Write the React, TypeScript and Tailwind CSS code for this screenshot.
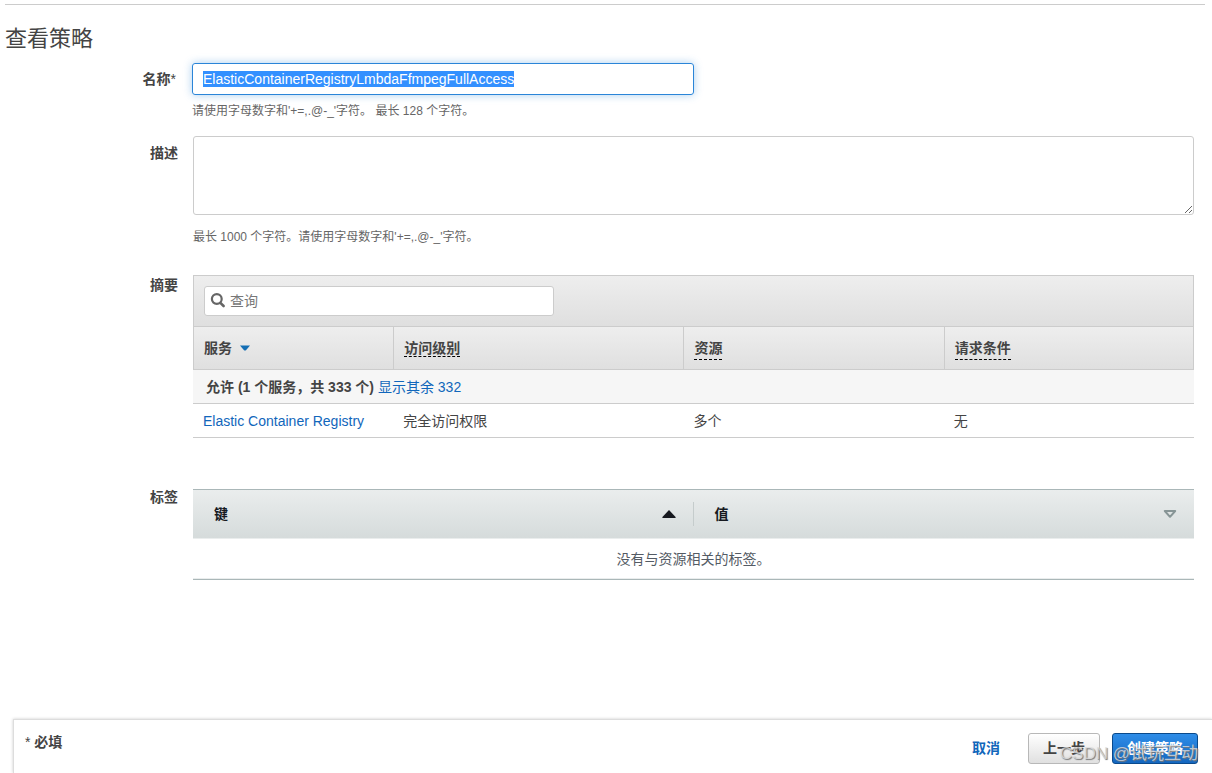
import React, { ReactNode, useEffect, useRef } from 'react';

const SearchIcon = ({ className }: { className?: string }) => (
    <svg xmlns="http://www.w3.org/2000/svg" className={className} viewBox="0 0 16 16" fill="none" stroke="currentColor">
        <circle cx="6.8" cy="6" r="4.9" strokeWidth={2.2} />
        <path d="M10.4 9.8l3.2 3.2" strokeWidth={2.6} strokeLinecap="round" />
    </svg>
);

const CaretDownIcon = ({ className }: { className?: string }) => (
    <svg xmlns="http://www.w3.org/2000/svg" className={className} viewBox="0 0 10 6" fill="currentColor">
        <path d="M0 .5h10L6 5.2Q5 6 4 5.2z" />
    </svg>
);

const SortAscIcon = ({ className }: { className?: string }) => (
    <svg xmlns="http://www.w3.org/2000/svg" className={className} viewBox="0 0 14 8" fill="currentColor">
        <path d="M7 0l6.8 7.2-.5.8H.7l-.5-.8z" />
    </svg>
);

const SortNoneIcon = ({ className }: { className?: string }) => (
    <svg xmlns="http://www.w3.org/2000/svg" className={className} viewBox="0 0 14 8" fill="none" stroke="currentColor">
        <path d="M1.8 1h10.4L7 6.8z" strokeWidth={2} strokeLinejoin="round" />
    </svg>
);

type FormRowProps = {
    label: string;
    required?: boolean;
    htmlFor?: string;
    className?: string;
    children: ReactNode;
};

const FormRow = ({ label, required, htmlFor, className, children }: FormRowProps) => (
    <div className={`flex pr-[18px] ${className ?? ''}`}>
        <div className={`shrink-0 text-right font-bold leading-5 ${required ? 'mr-4 w-[176px]' : 'mr-[15px] w-[178px]'}`}>
            {htmlFor ? (
                <label htmlFor={htmlFor}>
                    {label}
                    {required && <span className="font-normal">*</span>}
                </label>
            ) : (
                <span>{label}</span>
            )}
        </div>
        <div className="min-w-0 flex-1">{children}</div>
    </div>
);

const columns = [
    { title: '访问级别', underline: 'border-b border-dashed border-black' },
    { title: '资源', underline: 'border-b border-dashed border-black pb-[3px]' },
    { title: '请求条件', underline: 'border-b border-dashed border-black pb-[3px]' },
];

const SummaryTable = () => (
    <div>
        <div className="border border-[#ccc] bg-linear-to-b from-[#eee] to-[#dfdfdf] p-[10px]">
            <div className="flex h-[30px] w-[350px] items-center gap-1 rounded-[3px] border border-[#ccc] bg-white px-[5px]">
                <SearchIcon className="h-4 w-4 shrink-0 text-[#666]" />
                <input type="search" aria-label="查询" placeholder="查询" className="min-w-0 flex-1 text-sm outline-none placeholder:text-[#777]" />
            </div>
        </div>
        <table className="w-full table-fixed border-separate border-spacing-0 text-left">
            <colgroup>
                <col className="w-[20%]" />
                <col className="w-[29%]" />
                <col className="w-[26%]" />
                <col className="w-[25%]" />
            </colgroup>
            <thead>
                <tr className="h-[43px] bg-linear-to-b from-[#eee] to-[#dfdfdf]">
                    <th className="border-b border-l border-[#ccc] px-[10px] py-0">
                        <button type="button" className="flex items-center gap-2 font-bold">
                            服务
                            <CaretDownIcon className="h-[6px] w-[10px] text-[#146eb4]" />
                        </button>
                    </th>
                    {columns.map((column) => (
                        <th key={column.title} className="border-b border-l border-[#ccc] px-[10px] py-0 last:border-r">
                            <span className={column.underline}>{column.title}</span>
                        </th>
                    ))}
                </tr>
            </thead>
            <tbody>
                <tr className="h-[34px] bg-[#f6f6f6]">
                    <td colSpan={4} className="border-b border-[#ccc] px-[13px] py-0">
                        <strong>允许 (1 个服务，共 333 个)</strong>{' '}
                        <a href="#all" className="text-[#1166bb]">显示其余 332</a>
                    </td>
                </tr>
                <tr className="h-[34px]">
                    <td className="border-b border-[#ccc] px-[10px] py-0">
                        <a href="#ecr" className="text-[#1166bb]">Elastic Container Registry</a>
                    </td>
                    <td className="border-b border-[#ccc] px-[10px] py-0">完全访问权限</td>
                    <td className="border-b border-[#ccc] px-[10px] py-0">多个</td>
                    <td className="border-b border-[#ccc] px-[10px] py-0">无</td>
                </tr>
            </tbody>
        </table>
    </div>
);

const TagsTable = () => (
    <table className="w-full table-fixed border-separate border-spacing-0 border-y border-[#aab7b8] text-left">
        <thead>
            <tr className="h-[49px] bg-linear-to-b from-[#eaeded] to-[#d5dbdb] text-[#16191f]">
                <th className="border-b border-[#eaeded] p-0">
                    <div className="flex h-6 items-center justify-between border-r border-[#c5cccc] pr-[17px] pl-[21px]">
                        键
                        <button type="button" aria-label="按键排序"><SortAscIcon className="h-2 w-[14px]" /></button>
                    </div>
                </th>
                <th className="border-b border-[#eaeded] p-0">
                    <div className="flex h-6 items-center justify-between pr-[17px] pl-[21px]">
                        值
                        <button type="button" aria-label="按值排序"><SortNoneIcon className="h-2 w-[14px] text-[#879596]" /></button>
                    </div>
                </th>
            </tr>
        </thead>
        <tbody>
            <tr className="h-10 text-center text-[#545b64]">
                <td colSpan={2} className="border-b border-[#eaeded] p-0">没有与资源相关的标签。</td>
            </tr>
        </tbody>
    </table>
);

const Footer = () => (
    <footer className="mt-auto ml-[13px] flex h-[54px] justify-between border-t border-l border-[#ddd] bg-white pr-[14px] pl-[11px] shadow-[0_0_3px_rgba(0,0,0,0.2)]">
        <p className="pt-3 font-bold leading-5"><span className="font-normal">*</span> 必填</p>
        <div className="relative mt-3 flex h-8 items-center">
            <a href="#cancel" className="mr-7 pb-px font-bold text-[#1166bb]">取消</a>
            <button type="button" className="mr-3 h-[31px] w-[72px] rounded-[3px] border border-[#b8b8b8] bg-linear-to-b from-white to-[#e0e0e0] font-bold">上一步</button>
            <button type="button" className="h-[31px] w-[86px] rounded-[3px] border border-[#0a4a8c] bg-linear-to-b from-[#2e8de8] to-[#1467c0] font-bold text-white">创建策略</button>
            <span className="pointer-events-none absolute top-3 right-0 text-[17px] leading-5 whitespace-nowrap text-[#ddd]/80 [text-shadow:1px_1px_1px_#777]">CSDN @试玩互动</span>
        </div>
    </footer>
);

export default function App() {
    const nameRef = useRef<HTMLInputElement>(null);

    useEffect(() => {
        nameRef.current?.focus();
        nameRef.current?.select();
    }, []);

    return (
        <div className="flex min-h-screen flex-col overflow-hidden bg-white pt-1 font-['Liberation_Sans','Noto_Sans_CJK_SC',sans-serif] text-sm leading-5 text-[#444]">
            <hr className="mr-[7px] ml-[5px] border-[#ccc]" />
            <h1 className="mt-5 ml-[5px] text-[22px] leading-7">查看策略</h1>
            <form className="mt-[10px]">
                <FormRow label="名称" required htmlFor="policy-name" className="[&>div:first-child]:pt-[6px]">
                    <input
                        ref={nameRef}
                        id="policy-name"
                        type="text"
                        defaultValue="ElasticContainerRegistryLmbdaFfmpegFullAccess"
                        className="block h-8 w-[502px] rounded-[3px] border border-[#2a85d8] px-[10px] text-sm leading-4 shadow-[0_0_8px_rgba(42,133,216,0.4)] outline-none selection:bg-[#3390ff] selection:text-white"
                    />
                    <p className="mt-[6px] text-xs leading-5 text-[#666]">请使用字母数字和'+=,.@-_'字符。 最长 128 个字符。</p>
                </FormRow>
                <FormRow label="描述" htmlFor="policy-description" className="mt-[15px] [&>div:first-child]:pt-[7px]">
                    <textarea id="policy-description" className="block h-[79px] w-full rounded-[3px] border border-[#ccc] p-2 outline-none" />
                    <p className="mt-3 text-xs leading-5 text-[#666]">最长 1000 个字符。请使用字母数字和'+=,.@-_'字符。</p>
                </FormRow>
                <FormRow label="摘要" className="mt-7">
                    <SummaryTable />
                </FormRow>
                <FormRow label="标签" className="mt-[51px] [&>div:first-child]:-mt-[2px]">
                    <TagsTable />
                </FormRow>
            </form>
            <Footer />
        </div>
    );
}
